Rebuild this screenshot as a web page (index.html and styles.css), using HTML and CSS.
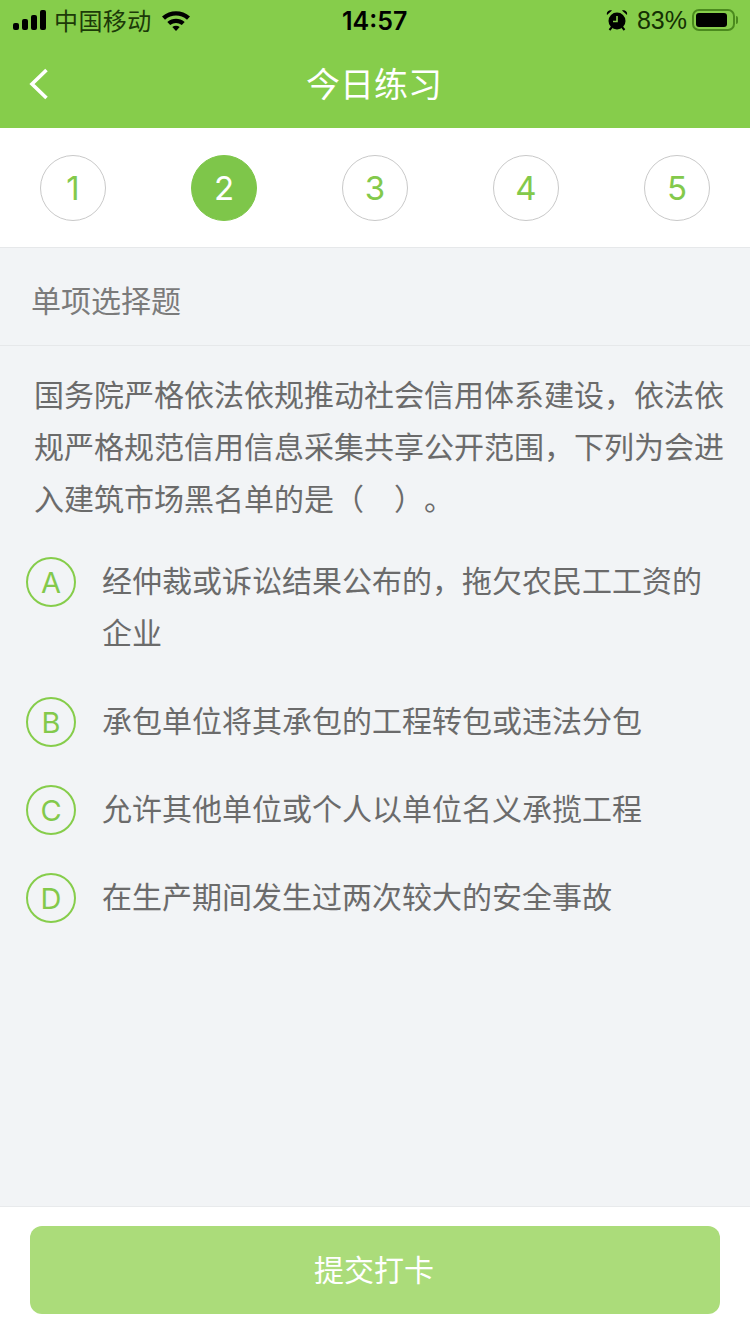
FILE: index.html
```html
<!DOCTYPE html>
<html lang="zh-CN">
<head>
  <meta charset="UTF-8" />
  <meta name="viewport" content="width=device-width, initial-scale=1.0"/>
  <title>今日练习</title>
  <link rel="stylesheet" href="styles.css">
</head>
<body>
  <div class="page">
    <header class="header">
      <!-- Barra de estado -->
      <div class="status-bar">
        <div class="status-left">
          <svg class="signal" width="35" height="20" viewBox="0 0 35 20">
            <rect x="0" y="13" width="6" height="7" rx="2"/>
            <rect x="9" y="9" width="6" height="11" rx="2"/>
            <rect x="18" y="5" width="6" height="15" rx="2"/>
            <rect x="27" y="0" width="6" height="20" rx="2"/>
          </svg>
          <span class="carrier">中国移动</span>
          <svg class="wifi" width="30" height="22" viewBox="0 0 30 22">
            <path d="M1 7.5C9 0.5 21 0.5 29 7.5L26 10.8C19.5 5.2 10.5 5.2 4 10.8Z"/>
            <path d="M6.3 13C11.5 8.7 18.5 8.7 23.7 13L20.8 16C17.2 13.2 12.8 13.2 9.2 16Z"/>
            <path d="M11.3 18C13.5 16.4 16.5 16.4 18.7 18L15 22Z"/>
          </svg>
        </div>
        <span class="time">14:57</span>
        <div class="status-right">
          <svg class="alarm" width="22" height="22" viewBox="0 0 22 22">
            <circle cx="11" cy="12" r="8.5"/>
            <path d="M1 6L6 1.5C3 0.5 0 3 1 6ZM21 6L16 1.5C19 0.5 22 3 21 6Z"/>
            <path d="M3.5 21L6 18M18.5 21L16 18" stroke="#000" stroke-width="2" fill="none"/>
            <path d="M11 7V12.5H7" stroke="#86cd4b" stroke-width="1.6" fill="none"/>
          </svg>
          <span class="battery-text">83%</span>
          <div class="battery">
            <div class="battery-body"><div class="battery-level"></div></div>
            <div class="battery-cap"></div>
          </div>
        </div>
      </div>
      <div class="nav">
        <svg class="back" width="20" height="32" viewBox="0 0 20 32">
          <path d="M17.5 2L3 16L17.5 30" fill="none" stroke="#fff" stroke-width="3.6"/>
        </svg>
        <h1 class="nav-title">今日练习</h1>
      </div>
    </header>

    <div class="steps">
      <div class="step">1</div>
      <div class="step active">2</div>
      <div class="step">3</div>
      <div class="step">4</div>
      <div class="step">5</div>
    </div>

    <main class="content">
      <div class="section-title">单项选择题</div>
      <p class="question">国务院严格依法依规推动社会信用体系建设，依法依规严格规范信用信息采集共享公开范围，下列为会进入建筑市场黑名单的是（　）。</p>
      <div class="options">
        <div class="option">
          <div class="letter">A</div>
          <div class="option-text">经仲裁或诉讼结果公布的，拖欠农民工工资的企业</div>
        </div>
        <div class="option">
          <div class="letter">B</div>
          <div class="option-text">承包单位将其承包的工程转包或违法分包</div>
        </div>
        <div class="option">
          <div class="letter">C</div>
          <div class="option-text">允许其他单位或个人以单位名义承揽工程</div>
        </div>
        <div class="option">
          <div class="letter">D</div>
          <div class="option-text">在生产期间发生过两次较大的安全事故</div>
        </div>
      </div>
    </main>

    <footer class="footer">
      <button class="submit">提交打卡</button>
    </footer>
  </div>
</body>
</html>
```

FILE: styles.css
```css
html, body {
  margin: 0;
  padding: 0;
  background-color: #f2f4f6;
  font-family: "Noto Sans CJK SC", "Noto Sans", sans-serif;
}

.page {
  width: 750px;
  height: 1334px;
  display: flex;
  flex-direction: column;
  overflow: hidden;
}

.header {
  background-color: #86cd4b;
  height: 128px;
}

.status-bar {
  height: 40px;
  display: flex;
  align-items: center;
  justify-content: space-between;
  padding: 0 12px 0 13px;
  color: #000;
  position: relative;
}

.status-left, .status-right {
  display: flex;
  align-items: center;
}

.signal {
  margin-right: 7px;
}

.carrier {
  font-size: 24px;
  letter-spacing: 0.4px;
  line-height: 40px;
  color: #1c3a08;
  margin-left: -1px;
}

.wifi {
  margin-left: 9px;
}

.time {
  position: absolute;
  left: 342px;
  top: 1px;
  font-family: Inter, "Liberation Sans", sans-serif;
  font-size: 25px;
  font-weight: 600;
  line-height: 40px;
}

.alarm {
  margin-right: 9px;
}

.battery-text {
  font-family: "Liberation Sans", sans-serif;
  font-size: 25px;
  line-height: 40px;
  color: #143003;
  margin-right: 5px;
}

.battery {
  display: flex;
  align-items: center;
}

.battery-body {
  width: 43px;
  height: 22px;
  box-sizing: border-box;
  border: 2px solid #4b8a1e;
  border-radius: 7px;
  padding: 2px;
}

.battery-level {
  width: 31px;
  height: 14px;
  background-color: #000;
  border-radius: 3px;
}

.battery-cap {
  width: 2px;
  height: 8px;
  margin-left: 1px;
  background-color: #4b8a1e;
  border-radius: 0 2px 2px 0;
}

.nav {
  height: 88px;
  display: flex;
  align-items: center;
  justify-content: center;
  position: relative;
}

.back {
  position: absolute;
  left: 29px;
  top: 28px;
}

.nav-title {
  margin: 0 2px 0 0;
  font-size: 34px;
  font-weight: 400;
  color: #fff;
  position: relative;
  top: -2px;
}

.steps {
  background-color: #fff;
  border-bottom: 1px solid #e6e8ea;
  padding: 27px 40px 0;
  height: 92px;
  display: flex;
  justify-content: space-between;
  align-items: flex-start;
}

.step {
  width: 66px;
  height: 66px;
  box-sizing: border-box;
  border: 1px solid #c9c9c9;
  border-radius: 50%;
  color: #83c94b;
  font-family: Inter, "Liberation Sans", sans-serif;
  font-size: 33px;
  font-weight: 400;
  display: flex;
  align-items: center;
  justify-content: center;
}

.step.active {
  background-color: #7ec64a;
  border-color: #7ec64a;
  color: #fff;
}

.content {
  flex: 1;
  color: #666;
}

.section-title {
  height: 98px;
  box-sizing: border-box;
  border-bottom: 1px solid #e6e8ea;
  padding: 0 30px 0 31px;
  font-size: 30px;
  line-height: 103px;
  color: #7b7b7b;
}

.question {
  margin: 0;
  padding: 21px 26px 0 34px;
  font-size: 30px;
  line-height: 52px;
  color: #6b6b6b;
  text-spacing-trim: space-all;
}

.options {
  padding: 30px 30px 0 26px;
}

.option {
  display: flex;
  align-items: flex-start;
  margin-bottom: 36px;
}

.letter {
  width: 50px;
  height: 50px;
  flex-shrink: 0;
  box-sizing: border-box;
  border: 2px solid #86cd4b;
  border-radius: 50%;
  color: #83c94b;
  font-family: Inter, "Liberation Sans", sans-serif;
  font-size: 29px;
  font-weight: 400;
  display: flex;
  align-items: center;
  justify-content: center;
  margin: 4px 26px -4px 0;
}

.option-text {
  font-size: 30px;
  line-height: 52px;
  color: #6b6b6b;
}

.footer {
  background-color: #fff;
  border-top: 1px solid #e8eaec;
  padding: 19px 30px 0;
  height: 108px;
}

.submit {
  width: 100%;
  height: 88px;
  border: none;
  border-radius: 12px;
  background-color: #abdc7a;
  color: #fff;
  font-family: inherit;
  font-size: 30px;
  padding: 0 2px 4px 0;
}
```
